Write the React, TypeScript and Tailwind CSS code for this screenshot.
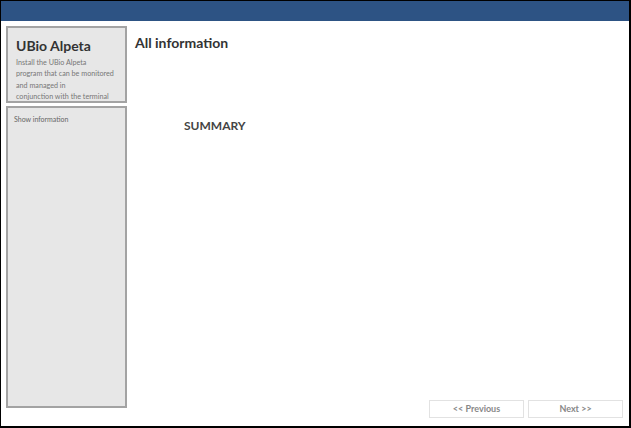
const App = () => {
  return (
    <div
      className="w-[631px] h-[428px] bg-black p-[1px] pr-[2px] pb-[2px]"
      style={{ fontFamily: 'Lato, "Open Sans", sans-serif' }}
    >
      <div className="flex flex-col w-full h-full bg-white">
        {/* Top bar */}
        <div className="h-[20px] bg-[#2d5384] shrink-0"></div>

        <div className="flex flex-1 min-h-0 pl-[5px] pt-[5px]">
          {/* Sidebar */}
          <div className="flex flex-col w-[121px] gap-[3px] pb-[18px]">
            <div className="h-[77px] bg-[#e7e7e7] border-2 border-[#a3a3a3] pl-[8px] pr-[2px] pt-[9px] overflow-hidden">
              <div className="text-[14px] leading-[18px] font-bold text-[#333]">UBio Alpeta</div>
              <p className="mt-[1.5px] whitespace-nowrap text-[7.2px] leading-[11.5px] text-[#777]">
                Install the UBio Alpeta
                <br />
                program that can be monitored
                <br />
                and managed in
                <br />
                conjunction with the terminal
              </p>
            </div>
            <div className="flex-1 bg-[#e7e7e7] border-2 border-[#a3a3a3] px-[6px] pt-[6px]">
              <div className="text-[7px] leading-[10px] text-[#666]">Show information</div>
            </div>
          </div>

          {/* Main */}
          <div className="flex flex-col flex-1 pl-[8px] pr-[6px]">
            <h1 className="mt-[8px] text-[14px] leading-[18px] font-bold text-[#333]">All information</h1>
            <div className="mt-[66px] pl-[49px] text-[12px] leading-[16px] font-bold text-[#444]">SUMMARY</div>
            <div className="flex-1"></div>
            <div className="flex justify-end gap-[4px] pb-[8px]">
              <button className="w-[95px] h-[18px] border border-[#e2e2e2] bg-white text-[9px] font-bold text-[#888]">
                &lt;&lt; Previous
              </button>
              <button className="w-[95px] h-[18px] border border-[#e2e2e2] bg-white text-[9px] font-bold text-[#888]">
                Next &gt;&gt;
              </button>
            </div>
          </div>
        </div>
      </div>
    </div>
  );
};

export default App;
